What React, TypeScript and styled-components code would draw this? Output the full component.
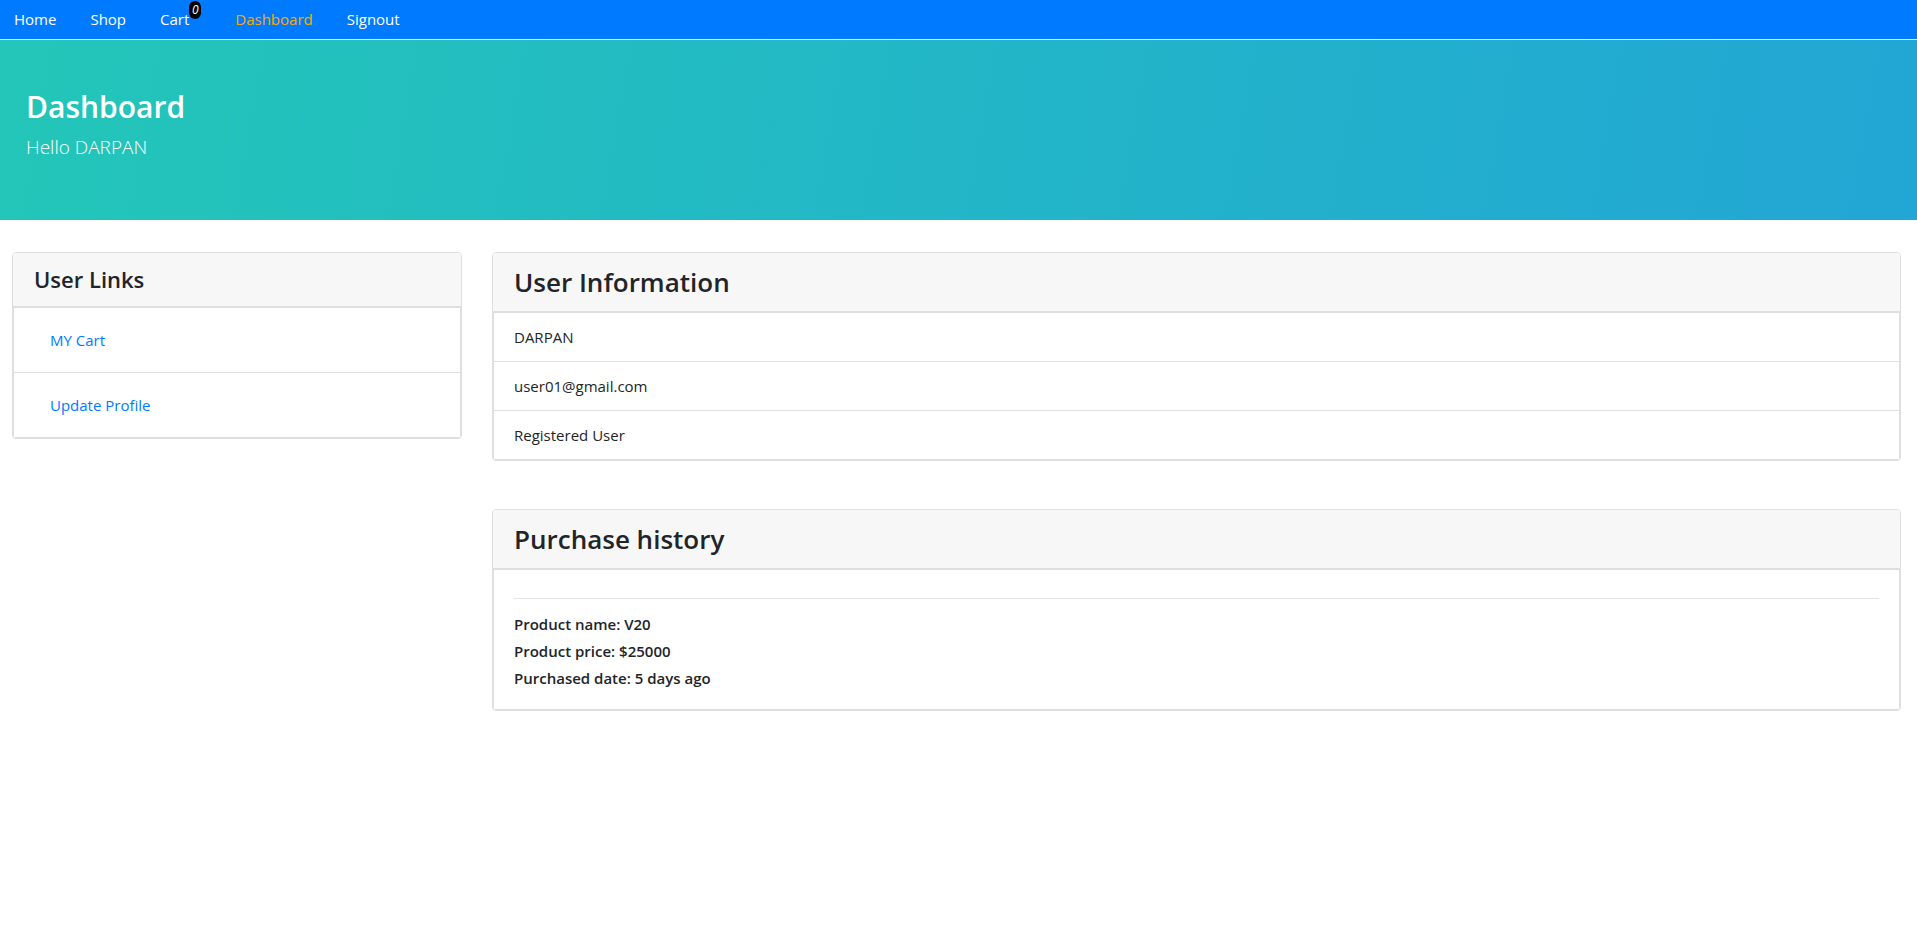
import styled, { createGlobalStyle } from "styled-components";

const GlobalStyle = createGlobalStyle`
  * {
    box-sizing: border-box;
  }

  body {
    margin: 0;
    font-family: "Open Sans", "Noto Sans", "Liberation Sans", sans-serif;
    font-size: 16px;
    line-height: 1.5;
    color: #212529;
    background: #fff;
  }
`;

const NAV_ITEMS = [
  { label: "Home" },
  { label: "Shop" },
  { label: "Cart", badge: 0 },
  { label: "Dashboard", active: true },
  { label: "Signout" },
];

const USER_LINKS = ["MY Cart", "Update Profile"];

const USER_INFO = ["DARPAN", "user01@gmail.com", "Registered User"];

const PURCHASES = [{ name: "V20", price: 25000, date: "5 days ago" }];

const Navbar = styled.nav`
  height: 40px;
  background: #007bff;
  border-bottom: 1px solid #e6f0fa;
  display: flex;
  align-items: center;
  padding-left: 14px;
  gap: 34px;
`;

const NavLink = styled.a<{ $active?: boolean }>`
  color: ${({ $active }) => ($active ? "#ffa500" : "#fff")};
  font-size: 15px;
  text-decoration: none;
  cursor: pointer;
  display: flex;
  align-items: flex-start;
`;

const Badge = styled.span`
  display: inline-flex;
  align-items: center;
  justify-content: center;
  margin-top: -7px;
  min-width: 12px;
  height: 18px;
  padding: 0 2px;
  border-radius: 10px;
  background: #000;
  color: #fff;
  font-size: 12px;
  font-style: italic;
  line-height: 1;
`;

const Jumbotron = styled.header`
  height: 180px;
  padding: 49px 26px 0;
  background: linear-gradient(100deg, #23c6b8 0%, #22b6c7 50%, #22a6d5 100%);
  color: #fff;
  margin-bottom: 32px;
`;

const Title = styled.h2`
  margin: 0 0 8px;
  font-size: 30px;
  font-weight: 600;
  line-height: 1.2;
`;

const Lead = styled.p`
  margin: 0;
  font-size: 19px;
  font-weight: 300;
`;

const Layout = styled.main`
  display: grid;
  grid-template-columns: 450px 1fr;
  gap: 30px;
  padding: 0 16px 0 12px;
  align-items: start;
`;

const Column = styled.div`
  display: flex;
  flex-direction: column;
  gap: 48px;
`;

const Card = styled.section`
  border: 1px solid #dfdfdf;
  border-radius: 4px;
  background: #fff;
  overflow: hidden;
`;

const CardHeader = styled.div<{ $size: number }>`
  background: #f7f7f7;
  border-bottom: 1px solid #dfdfdf;
  padding: 12px 20px 12px 21px;
  font-size: ${({ $size }) => $size}px;
  font-weight: 600;
  line-height: ${({ $size }) => Math.round($size * 1.2) + 3}px;
`;

const List = styled.ul`
  list-style: none;
  margin: 0;
  padding: 0;
`;

const Item = styled.li`
  border: 1px solid #dfdfdf;
  margin-top: -1px;
  padding: 12px 20px;
  font-size: 15px;
  line-height: 24px;

  &:first-child {
    margin-top: 0;
  }
`;

const UserLink = styled.a`
  display: block;
  padding: 8px 16px;
  color: #007bff;
  font-size: 15px;
  line-height: 24px;
  text-decoration: none;
  cursor: pointer;
`;

const Divider = styled.hr`
  margin: 16px 0;
  border: 0;
  border-top: 1px solid rgba(0, 0, 0, 0.1);
`;

const Detail = styled.h6`
  margin: 0 0 8px;
  font-size: 15px;
  font-weight: 600;
  line-height: 19.2px;
`;

const App = () => {
  return (
    <>
      <GlobalStyle />
      <Navbar>
        {NAV_ITEMS.map((item) => (
          <NavLink key={item.label} $active={item.active}>
            {item.label}
            {item.badge !== undefined && <Badge>{item.badge}</Badge>}
          </NavLink>
        ))}
      </Navbar>

      <Jumbotron>
        <Title>Dashboard</Title>
        <Lead>Hello DARPAN</Lead>
      </Jumbotron>

      <Layout>
        <Card>
          <CardHeader $size={22}>User Links</CardHeader>
          <List>
            {USER_LINKS.map((link) => (
              <Item key={link}>
                <UserLink>{link}</UserLink>
              </Item>
            ))}
          </List>
        </Card>

        <Column>
          <Card>
            <CardHeader $size={26}>User Information</CardHeader>
            <List>
              {USER_INFO.map((info) => (
                <Item key={info}>{info}</Item>
              ))}
            </List>
          </Card>

          <Card>
            <CardHeader $size={26}>Purchase history</CardHeader>
            <List>
              {PURCHASES.map((p) => (
                <Item key={p.name}>
                  <Divider />
                  <Detail>Product name: {p.name}</Detail>
                  <Detail>Product price: ${p.price}</Detail>
                  <Detail>Purchased date: {p.date}</Detail>
                </Item>
              ))}
            </List>
          </Card>
        </Column>
      </Layout>
    </>
  );
};

export default App;
